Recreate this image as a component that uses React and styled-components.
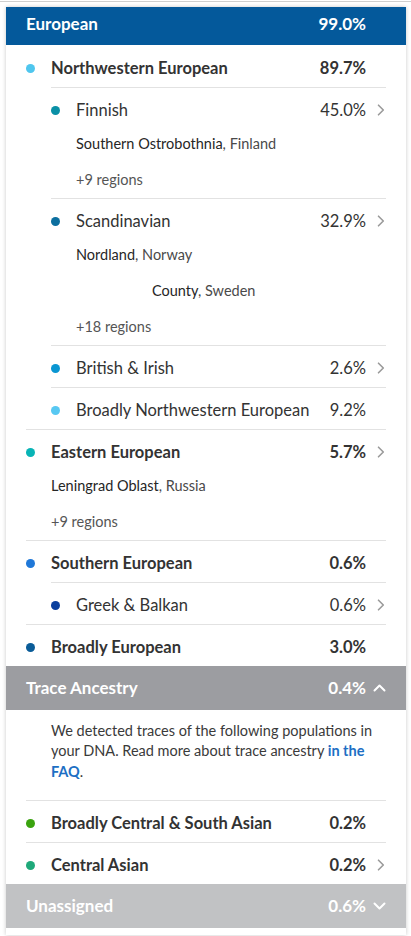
import React from "react";
import styled, { createGlobalStyle } from "styled-components";

const GlobalStyle = createGlobalStyle`
  html, body { margin: 0; padding: 0; background: #ffffff; }
  body { font-family: Lato, "Noto Sans", sans-serif; color: #333333; }
  * { box-sizing: border-box; }
`;

const Page = styled.div`
  width: 411px;
  min-height: 936px;
  padding-top: 1px;
  background: #ffffff;
`;

const Rule = styled.div`
  height: 1px;
  background: #cfcfcf;
`;

const Card = styled.div`
  margin: 5px 5px 0 6px;
  width: 400px;
  background: #ffffff;
  box-shadow: 0 0 4px rgba(0, 0, 0, 0.22);
`;

const Band = styled.div`
  display: grid;
  grid-template-columns: 1fr auto 20px;
  align-items: center;
  padding: ${(p) => (p.$tone === "blue" ? "7px 20px 11px" : "12px 20px 12px")};
  background: ${(p) =>
    p.$tone === "blue" ? "#04599b" : p.$tone === "light" ? "#c1c2c4" : "#9c9da1"};
  color: #ffffff;
  font-weight: 700;
  font-size: 17px;
  line-height: 20px;
`;

const BandPct = styled.span`
  text-align: right;
`;

const IconCell = styled.span`
  display: flex;
  justify-content: flex-end;
  align-items: center;
  height: 20px;
`;

const Section = styled.div`
  margin: 0 20px;
  border-bottom: ${(p) => (p.$last ? "none" : "1px solid #e2e2e2")};
`;

const Row = styled.div`
  display: grid;
  grid-template-columns: 25px 1fr auto 20px;
  align-items: center;
  padding: ${(p) => (p.$first ? "13px 0 9px" : "12px 0 9px")};
  font-size: 16.5px;
  line-height: 20px;
  font-weight: ${(p) => (p.$bold ? 700 : 400)};
  color: #333333;
`;

const Dot = styled.span`
  width: 9px;
  height: 9px;
  border-radius: 50%;
  background: ${(p) => p.$color};
`;

const Name = styled.span`
  white-space: nowrap;
`;

const Pct = styled.span`
  text-align: right;
`;

const ChevronCell = styled.span`
  display: flex;
  justify-content: flex-start;
  align-items: center;
  padding-left: 11px;
  height: 20px;
`;

const Children = styled.div`
  margin-left: 25px;
`;

const Child = styled.div`
  border-top: 1px solid #e2e2e2;
`;

const Regions = styled.div`
  margin-top: -3px;
  padding-left: 25px;
  font-size: 14.5px;
  line-height: 36px;
  color: #4a4a4a;
`;

const RegionLine = styled.div`
  white-space: nowrap;
  padding-left: ${(p) => (p.$indent ? "76px" : "0")};
`;

const Place = styled.span`
  color: #262626;
`;

const More = styled.div`
  color: #555555;
`;

const Para = styled.p`
  margin: 0 20px;
  padding: 11px 10px 18px 25px;
  font-size: 14.5px;
  line-height: 20.4px;
  color: #3a3a3a;
  border-bottom: 1px solid #e2e2e2;
`;

const Link = styled.a`
  color: #1d6fc4;
  font-weight: 700;
  text-decoration: none;
`;

const Tail = styled.div`
  height: 7px;
`;

const ChevronRight = () => (
  <svg width="8" height="12" viewBox="0 0 8 12" fill="none">
    <path d="M1.5 1.2 L6.3 6 L1.5 10.8" stroke="#9a9a9a" strokeWidth="1.6" strokeLinecap="round" strokeLinejoin="round" />
  </svg>
);

const ChevronV = ({ up }) => (
  <svg width="13" height="8" viewBox="0 0 13 8" fill="none">
    <path
      d={up ? "M1.5 6.5 L6.5 1.5 L11.5 6.5" : "M1.5 1.5 L6.5 6.5 L11.5 1.5"}
      stroke="#ffffff"
      strokeWidth="2"
      strokeLinecap="round"
      strokeLinejoin="round"
    />
  </svg>
);

const european = [
  {
    name: "Northwestern European",
    pct: "89.7%",
    color: "#4fc6ee",
    children: [
      {
        name: "Finnish",
        pct: "45.0%",
        color: "#0a90a6",
        chevron: true,
        regions: [{ place: "Southern Ostrobothnia", country: "Finland" }],
        more: "+9 regions",
      },
      {
        name: "Scandinavian",
        pct: "32.9%",
        color: "#0c6f9f",
        chevron: true,
        regions: [
          { place: "Nordland", country: "Norway" },
          { place: "County", country: "Sweden", indent: true },
        ],
        more: "+18 regions",
      },
      { name: "British & Irish", pct: "2.6%", color: "#0a96d2", chevron: true },
      { name: "Broadly Northwestern European", pct: "9.2%", color: "#58c8f2" },
    ],
  },
  {
    name: "Eastern European",
    pct: "5.7%",
    color: "#08b4b6",
    chevron: true,
    regions: [{ place: "Leningrad Oblast", country: "Russia" }],
    more: "+9 regions",
  },
  {
    name: "Southern European",
    pct: "0.6%",
    color: "#1f78d8",
    children: [{ name: "Greek & Balkan", pct: "0.6%", color: "#0a3f9e", chevron: true }],
  },
  { name: "Broadly European", pct: "3.0%", color: "#0a5c98" },
];

const trace = [
  { name: "Broadly Central & South Asian", pct: "0.2%", color: "#3aa30f" },
  { name: "Central Asian", pct: "0.2%", color: "#1fa97a", chevron: true },
];

const RegionList = ({ regions, more }) => (
  <Regions>
    {regions.map((r) => (
      <RegionLine key={r.place} $indent={r.indent}>
        <Place>{r.place}</Place>, {r.country}
      </RegionLine>
    ))}
    <More>{more}</More>
  </Regions>
);

const ItemRow = ({ item, bold, first }) => (
  <>
    <Row $bold={bold} $first={first}>
      <Dot $color={item.color} />
      <Name>{item.name}</Name>
      <Pct>{item.pct}</Pct>
      <ChevronCell>{item.chevron && <ChevronRight />}</ChevronCell>
    </Row>
    {item.regions && <RegionList regions={item.regions} more={item.more} />}
  </>
);

export default function App() {
  return (
    <Page>
      <GlobalStyle />
      <Rule />
      <Card>
        <Band $tone="blue">
          <span>European</span>
          <BandPct>99.0%</BandPct>
          <IconCell />
        </Band>
        {european.map((s, i) => (
          <Section key={s.name} $last={i === european.length - 1}>
            <ItemRow item={s} bold first={i === 0} />
            {s.children && (
              <Children>
                {s.children.map((c) => (
                  <Child key={c.name}>
                    <ItemRow item={c} />
                  </Child>
                ))}
              </Children>
            )}
          </Section>
        ))}
        <Band $tone="gray">
          <span>Trace Ancestry</span>
          <BandPct>0.4%</BandPct>
          <IconCell>
            <ChevronV up />
          </IconCell>
        </Band>
        <Para>
          We detected traces of the following populations in your DNA. Read more about trace
          ancestry <Link href="#">in the FAQ</Link>.
        </Para>
        {trace.map((t, i) => (
          <Section key={t.name} $last={i === trace.length - 1}>
            <ItemRow item={t} bold />
          </Section>
        ))}
        <Band $tone="light">
          <span>Unassigned</span>
          <BandPct>0.6%</BandPct>
          <IconCell>
            <ChevronV />
          </IconCell>
        </Band>
        <Tail />
      </Card>
    </Page>
  );
}
